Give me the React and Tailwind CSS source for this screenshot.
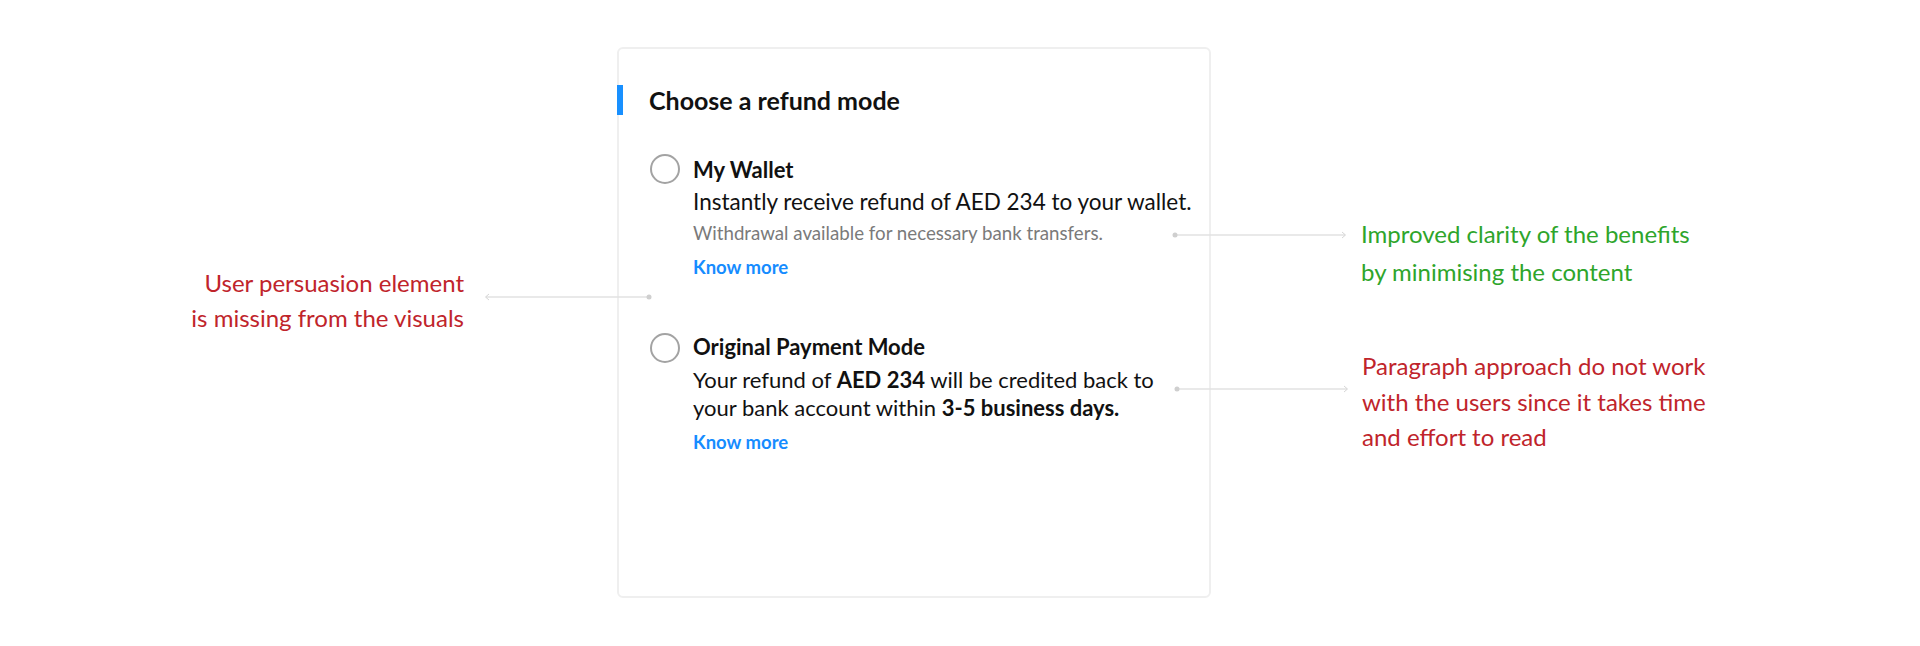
import React from 'react'

const font = { fontFamily: 'Lato, "Noto Sans", "Liberation Sans", sans-serif' }

function Pointer({ left, top, width, dir }) {
  // thin grey connector: dot at one end, small chevron at the other
  return (
    <svg className="absolute" style={{ left, top }} width={width} height="10" viewBox={`0 0 ${width} 10`}>
      <line x1="2" y1="5" x2={width - 2} y2="5" stroke="#e2e2e2" strokeWidth="1.5" />
      {dir === 'left' ? (
        <>
          <polyline points="5,2 1.5,5 5,8" fill="none" stroke="#d6d6d6" strokeWidth="1" />
          <circle cx={width - 3} cy="5" r="2.5" fill="#cfcfcf" />
        </>
      ) : (
        <>
          <circle cx="3" cy="5" r="2.5" fill="#cfcfcf" />
          <polyline points={`${width - 5},2 ${width - 1.5},5 ${width - 5},8`} fill="none" stroke="#d6d6d6" strokeWidth="1" />
        </>
      )}
    </svg>
  )
}

function Radio() {
  return <div className="w-[30px] h-[30px] rounded-full border-2 border-[#a3a3a3] shrink-0" />
}

export default function App() {
  return (
    <div className="relative w-[1920px] h-[646px] bg-white overflow-hidden" style={font}>
      <div className="pl-[617px] pt-[47px]">
        <div className="w-[594px] h-[551px] border-2 border-[#efefef] rounded-md bg-white">
          <div className="flex items-center mt-[36px]">
            <div className="-ml-[2px] w-[6px] h-[30px] bg-[#1890ff]" />
            <h1 className="ml-[26px] text-[25px] font-bold text-[#111] leading-[30px]">Choose a refund mode</h1>
          </div>

          <div className="pl-[31px] mt-[39px] flex gap-[13px]">
            <Radio />
            <div className="pt-[1px]">
              <div className="text-[22px] font-bold text-[#111] leading-[30px]">My Wallet</div>
              <div className="text-[22.5px] text-[#111] leading-[30px] mt-[2px]">Instantly receive refund of AED 234 to your wallet.</div>
              <div className="text-[18.7px] text-[#7a7a7a] leading-[26px] mt-[3px]">Withdrawal available for necessary bank transfers.</div>
              <div className="text-[18.5px] font-bold text-[#168cff] leading-[26px] mt-[8px]">Know more</div>
            </div>
          </div>

          <div className="pl-[31px] mt-[52px] flex gap-[13px]">
            <div className="mt-[1px]">
              <Radio />
            </div>
            <div>
              <div className="text-[22px] font-bold text-[#111] leading-[30px]">Original Payment Mode</div>
              <div className="text-[22px] text-[#111] leading-[28px] mt-[4px] w-[480px]">
                Your refund of <b>AED 234</b> will be credited back to your bank account within <b>3-5 business days.</b>
              </div>
              <div className="text-[18.5px] font-bold text-[#168cff] leading-[26px] mt-[7px]">Know more</div>
            </div>
          </div>
        </div>
      </div>

      <div className="absolute right-[1456px] top-[265px] text-right text-[24px] leading-[35px] text-[#c0242b]">
        <div>User persuasion element</div>
        <div>is missing from the visuals</div>
      </div>
      <Pointer left={484} top={292} width={168} dir="left" />

      <Pointer left={1172} top={230} width={175} dir="right" />
      <div className="absolute left-[1361px] top-[215px] text-[24px] leading-[38px] text-[#2ea52b]">
        <div>Improved clarity of the benefits</div>
        <div>by minimising the content</div>
      </div>

      <Pointer left={1174} top={384} width={175} dir="right" />
      <div className="absolute left-[1362px] top-[348px] text-[24px] leading-[35.5px] text-[#c0242b]">
        <div>Paragraph approach do not work</div>
        <div>with the users since it takes time</div>
        <div>and effort to read</div>
      </div>
    </div>
  )
}
